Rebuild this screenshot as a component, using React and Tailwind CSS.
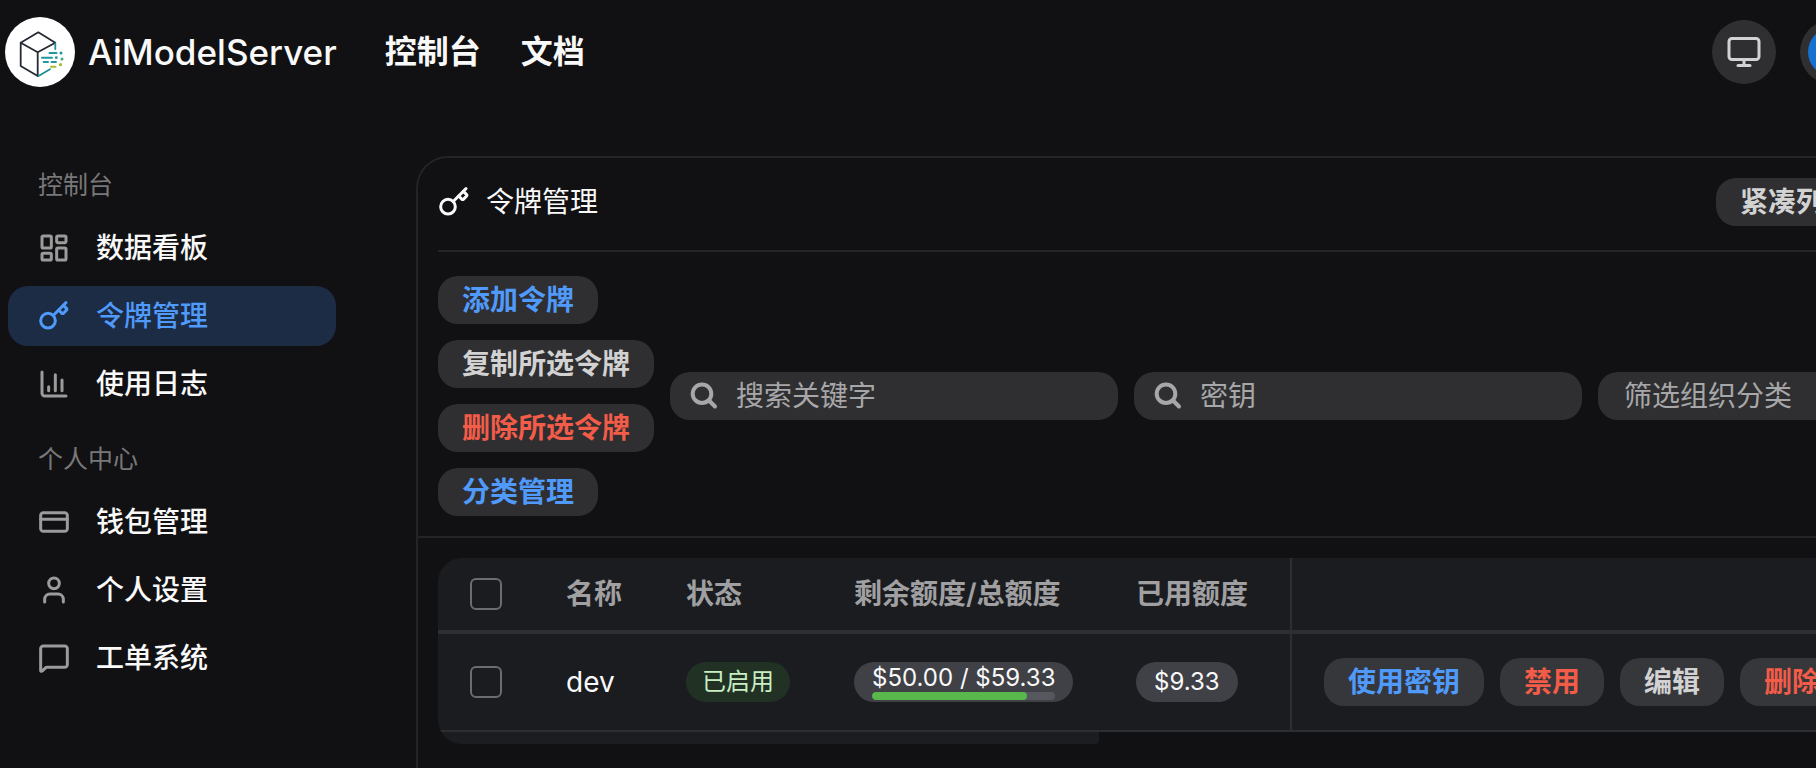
import {
  ChartColumn,
  CreditCard,
  Key,
  LayoutDashboard,
  MessageSquare,
  Monitor,
  User,
} from 'lucide-react';

const menuGroups = [
  {
    label: '控制台',
    items: [
      { text: '数据看板', icon: LayoutDashboard },
      { text: '令牌管理', icon: Key, active: true },
      { text: '使用日志', icon: ChartColumn },
    ],
  },
  {
    label: '个人中心',
    items: [
      { text: '钱包管理', icon: CreditCard },
      { text: '个人设置', icon: User },
      { text: '工单系统', icon: MessageSquare },
    ],
  },
];

const tokens = [
  { name: 'dev', status: '已启用', remain: 50.0, total: 59.33, used: 9.33 },
];

const tones = {
  primary: 'text-[#4f9afa]',
  danger: 'text-[#f25c48]',
  default: 'text-[#d2d2d3]',
};

const Button = ({ tone = 'default', onTable = false, children }) => (
  <button
    type="button"
    className={`h-12 shrink-0 rounded-[20px] px-6 text-[28px] leading-8 font-semibold whitespace-nowrap ${
      onTable ? 'bg-[#36373a]' : 'bg-[#2f2f31]'
    } ${tones[tone]}`}
  >
    {children}
  </button>
);

const Logo = () => (
  <svg viewBox="0 0 70 70" className="size-[70px]" fill="none" strokeLinecap="round" strokeLinejoin="round" aria-hidden="true">
    <circle cx="35" cy="35" r="35" fill="#fff" />
    <path d="M32.7 59V35.3L15.7 25.7V49L32.7 59M15.7 25.7 33.3 15.3 50.3 25.7 32.7 35.3" stroke="#262a33" strokeWidth="1.8" />
    <path d="M50.3 26.5V32M33.5 59 45 52.3" stroke="#1f8f97" strokeWidth="1.8" />
    <path d="M44.5 36H51.5M37 40.7H47M38.7 45H43M46.5 45H51" stroke="#1f979c" strokeWidth="2" />
    <path d="M46 49.7H50.5" stroke="#a3c02a" strokeWidth="2" />
    <g fill="#1f979c">
      <circle cx="56" cy="36" r="1.5" />
      <circle cx="51.3" cy="40.7" r="1.4" />
    </g>
    <circle cx="57" cy="42" r="1.5" fill="#4aa878" />
    <circle cx="55.5" cy="47.7" r="1.6" fill="#a3c02a" />
  </svg>
);

const SearchIcon = () => (
  <svg viewBox="0 0 32 32" className="size-8 shrink-0" fill="none" stroke="currentColor" strokeWidth="4" strokeLinecap="round" aria-hidden="true">
    <circle cx="14" cy="13.7" r="9.3" />
    <path d="M21 20.5 27 26.5" />
  </svg>
);

const SearchInput = ({ label }) => (
  <label className="flex h-12 w-[448px] shrink-0 items-center rounded-[20px] bg-[#2f2f31] pr-6 pl-[18px] text-[#a7a7a9]">
    <SearchIcon />
    <input
      type="text"
      aria-label={label}
      placeholder={label}
      className="ml-4 w-full min-w-0 bg-transparent text-[28px] leading-8 outline-none placeholder:text-[#a7a7a9]"
    />
  </label>
);

const Checkbox = ({ label }) => (
  <input
    type="checkbox"
    aria-label={label}
    className="block size-8 appearance-none rounded-md border-2 border-[#6b6c6f] checked:bg-[#4f9afa]"
  />
);

const Header = () => (
  <header className="flex h-[104px] items-center justify-between pr-4 pl-[5px]">
    <div className="flex items-center">
      <a href="#home" className="flex items-center gap-[13px]">
        <Logo />
        <span className="text-[35px] leading-10 font-medium">AiModelServer</span>
      </a>
      <nav className="ml-12 flex gap-10 text-[32px] font-semibold">
        <a href="#console">控制台</a>
        <a href="#docs">文档</a>
      </nav>
    </div>
    <div className="flex items-center gap-6">
      <button type="button" aria-label="切换主题" className="flex size-16 items-center justify-center rounded-full bg-[#2f2f31] text-[#d2d2d3]">
        <Monitor size={36} />
      </button>
      <button type="button" aria-label="用户菜单" className="flex h-16 w-[98px] items-center rounded-full bg-[#2f2f31] p-2">
        <span className="size-12 rounded-full bg-[#1672d0]" />
      </button>
    </div>
  </header>
);

const Sidebar = () => (
  <aside className="w-[416px] shrink-0 pt-[65px] pr-20 pl-2">
    {menuGroups.map(group => (
      <div key={group.label} className="mb-[29px]">
        <h2 className="mb-[17px] px-[30px] text-[25px] leading-8 text-[#78787a]">{group.label}</h2>
        <ul className="flex flex-col gap-2">
          {group.items.map(({ text, icon: Icon, active }) => (
            <li key={text}>
              <a
                href="#menu"
                className={`flex h-15 items-center gap-[26px] rounded-[20px] px-[30px] text-[28px] leading-8 font-medium ${
                  active ? 'bg-[#1c2c44] text-[#4f9afa]' : 'text-[#f9f9f9]'
                }`}
              >
                <Icon size={32} strokeWidth={2.25} className={active ? 'text-[#4f9afa]' : 'text-[#9b9b9c]'} />
                {text}
              </a>
            </li>
          ))}
        </ul>
      </div>
    ))}
  </aside>
);

const QuotaTag = ({ remain, total }) => (
  <div className="inline-flex h-10 flex-col rounded-full bg-[#404147] px-[18px] text-2xl">
    <span className="mt-0.5 leading-7 whitespace-nowrap">
      ${remain.toFixed(2)} / ${total.toFixed(2)}
    </span>
    <div className="h-2 overflow-hidden rounded-full bg-[#57575f]">
      <div className="h-full rounded-full bg-[#58b84c]" style={{ width: `${(remain / total) * 100}%` }} />
    </div>
  </div>
);

const TokenTable = () => (
  <div className="overflow-hidden rounded-[24px]">
    <table className="w-full table-fixed border-separate border-spacing-0 bg-[#1b1c20] text-left text-[28px]">
      <colgroup>
        <col className="w-24" />
        <col className="w-30" />
        <col className="w-[168px]" />
        <col className="w-[282px]" />
        <col className="w-[186px]" />
        <col />
      </colgroup>
      <thead>
        <tr className="h-[76px] text-[#a0a0a2] *:border-b-4 *:border-[#2d2e32] *:px-8 *:font-semibold *:whitespace-nowrap">
          <th><Checkbox label="全选" /></th>
          <th>名称</th>
          <th>状态</th>
          <th>剩余额度/总额度</th>
          <th>已用额度</th>
          <th className="border-l-2" aria-label="操作" />
        </tr>
      </thead>
      <tbody>
        {tokens.map(token => (
          <tr key={token.name} className="h-[98px] *:border-b-2 *:border-[#2d2e32] *:px-8">
            <td><Checkbox label={token.name} /></td>
            <td>{token.name}</td>
            <td>
              <span className="flex h-10 w-fit items-center rounded-full bg-[#213225] px-4 text-2xl whitespace-nowrap text-[#c8eec2]">
                {token.status}
              </span>
            </td>
            <td>
              <div className="flex">
                <QuotaTag remain={token.remain} total={token.total} />
              </div>
            </td>
            <td>
              <span className="flex h-10 w-fit items-center rounded-full bg-[#404147] px-[18px] text-2xl">
                ${token.used.toFixed(2)}
              </span>
            </td>
            <td className="border-l-2">
              <div className="flex gap-4">
                <Button tone="primary" onTable>使用密钥</Button>
                <Button tone="danger" onTable>禁用</Button>
                <Button onTable>编辑</Button>
                <Button tone="danger" onTable>删除</Button>
              </div>
            </td>
          </tr>
        ))}
      </tbody>
    </table>
    {/* horizontal scroll thumb */}
    <div className="h-3 w-[46%] rounded-br-sm bg-[#1c1d20]" />
  </div>
);

const TokenCard = () => (
  <section className="mt-[52px] min-w-0 grow rounded-t-[32px] border-2 border-b-0 border-[#242426]">
    <div className="border-b-2 border-[#242426] px-5 pb-5">
      <div className="flex items-center justify-between border-b-2 border-[#242426] pt-5 pb-6">
        <h1 className="flex items-center gap-4 text-[28px] leading-8">
          <Key size={32} strokeWidth={2.25} />
          令牌管理
        </h1>
        <Button>紧凑列表</Button>
      </div>
      <div className="flex items-center gap-4 pt-6">
        <div className="flex shrink-0 flex-col items-start gap-4">
          <Button tone="primary">添加令牌</Button>
          <Button>复制所选令牌</Button>
          <Button tone="danger">删除所选令牌</Button>
          <Button tone="primary">分类管理</Button>
        </div>
        <SearchInput label="搜索关键字" />
        <SearchInput label="密钥" />
        <select
          aria-label="筛选组织分类"
          className="h-12 min-w-0 grow appearance-none rounded-[20px] bg-[#2f2f31] px-[26px] text-[28px] leading-8 text-[#a7a7a9]"
        >
          <option>筛选组织分类</option>
        </select>
      </div>
    </div>
    <div className="p-5">
      <TokenTable />
    </div>
  </section>
);

const App = () => (
  <div className="min-h-screen overflow-hidden bg-[#111113] font-[Inter,'Noto_Sans_CJK_SC',sans-serif] text-[#f9f9f9]">
    {/* console runs past the right edge of the window */}
    <div className="-mr-[98px]">
      <Header />
      <div className="flex min-h-[calc(100vh-104px)] items-stretch pr-4">
        <Sidebar />
        <TokenCard />
      </div>
    </div>
  </div>
);

export default App;
